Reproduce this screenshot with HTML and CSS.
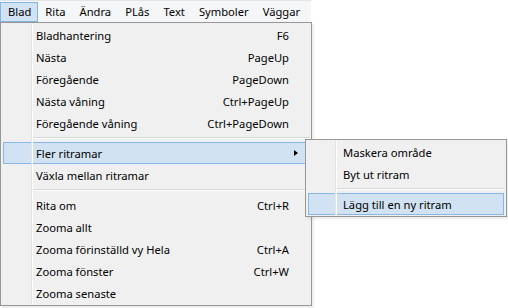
FILE: index.html
```html
<!DOCTYPE html>
<html lang="sv">
<head>
<meta charset="utf-8">
<title>Blad meny</title>
<link rel="stylesheet" href="styles.css">
</head>
<body>
<div class="menubar">
  <div class="mb-item active">Blad</div>
  <div class="mb-item">Rita</div>
  <div class="mb-item">Ändra</div>
  <div class="mb-item">PLås</div>
  <div class="mb-item">Text</div>
  <div class="mb-item">Symboler</div>
  <div class="mb-item">Väggar</div>
</div>
<div class="dropdown">
  <div class="row"><span class="label">Bladhantering</span><span class="key">F6</span></div>
  <div class="row"><span class="label">Nästa</span><span class="key">PageUp</span></div>
  <div class="row"><span class="label">Föregående</span><span class="key">PageDown</span></div>
  <div class="row"><span class="label">Nästa våning</span><span class="key">Ctrl+PageUp</span></div>
  <div class="row"><span class="label">Föregående våning</span><span class="key">Ctrl+PageDown</span></div>
  <div class="sep"></div>
  <div class="row hot has-sub"><span class="label">Fler ritramar</span><span class="arrow"></span>
    <div class="submenu">
      <div class="row"><span class="label">Maskera område</span></div>
      <div class="row"><span class="label">Byt ut ritram</span></div>
      <div class="sep"></div>
      <div class="row hot"><span class="label">Lägg till en ny ritram</span></div>
    </div>
  </div>
  <div class="row"><span class="label">Växla mellan ritramar</span></div>
  <div class="sep"></div>
  <div class="row"><span class="label">Rita om</span><span class="key">Ctrl+R</span></div>
  <div class="row"><span class="label">Zooma allt</span></div>
  <div class="row"><span class="label">Zooma förinställd vy Hela</span><span class="key">Ctrl+A</span></div>
  <div class="row"><span class="label">Zooma fönster</span><span class="key">Ctrl+W</span></div>
  <div class="row"><span class="label">Zooma senaste</span></div>
</div>
</body>
</html>
```

FILE: styles.css
```css
* { box-sizing: border-box; }
html, body {
  margin: 0;
  padding: 0;
  background: #ffffff;
}
body {
  font-family: "Noto Sans", "Open Sans", sans-serif;
  font-size: 11.2px;
  color: #000;
  position: relative;
  width: 508px;
  height: 308px;
  overflow: hidden;
}
.menubar {
  display: flex;
  width: 311px;
  height: 22px;
  padding-top: 1px;
  background: #f5f6f7;
  border-top: 1px solid #e3e4e5;
}
.mb-item {
  height: 20px;
  line-height: 18px;
  padding: 0 6px 0 7px;
  border: 1px solid transparent;
  white-space: nowrap;
}
.mb-item + .mb-item {
  padding-left: 6px;
}
.mb-item.active {
  background: #d1e2f2;
  border-color: #84b4e4;
}
.dropdown {
  position: absolute;
  top: 22px;
  left: 0;
  width: 312px;
  padding: 1px 2px;
  background: #f0f0f0;
  border: 1px solid #979797;
  box-shadow: 2px 2px 2px rgba(0,0,0,0.08);
}
.dropdown::before {
  content: "";
  position: absolute;
  top: 1px;
  bottom: 1px;
  left: 30px;
  width: 2px;
  background: linear-gradient(to right, #e2e3e3 0 1px, #ffffff 1px 2px);
  z-index: 2;
  pointer-events: none;
}
.row {
  position: relative;
  display: flex;
  align-items: center;
  height: 22px;
  padding: 0 19px 0 32px;
  border: 1px solid transparent;
  white-space: nowrap;
}
.row.hot {
  background: #d1e2f2;
  border-color: #8ab8e6;
}
.label { flex: 1; }
.key { text-align: right; }
.arrow {
  position: absolute;
  right: 10px;
  top: 7px;
  width: 0;
  height: 0;
  border-top: 3.5px solid transparent;
  border-bottom: 3.5px solid transparent;
  border-left: 4px solid #000;
}
.sep {
  height: 8px;
  margin-left: 30px;
  background: linear-gradient(to bottom, transparent 0 3px, #d7d7d7 3px 4px, #ffffff 4px 5px, transparent 5px);
}
.submenu {
  position: absolute;
  top: -4px;
  left: 301px;
  width: 202px;
  padding: 1px 2px;
  background: #f0f0f0;
  border: 1px solid #979797;
  box-shadow: 2px 2px 2px rgba(0,0,0,0.08);
  z-index: 5;
}
.submenu::before {
  content: "";
  position: absolute;
  top: 1px;
  bottom: 1px;
  left: 29px;
  width: 2px;
  background: linear-gradient(to right, #e2e3e3 0 1px, #ffffff 1px 2px);
  z-index: 2;
  pointer-events: none;
}
.submenu .row {
  padding: 0 10px 0 34px;
}
.submenu .sep {
  margin-left: 29px;
}
```
